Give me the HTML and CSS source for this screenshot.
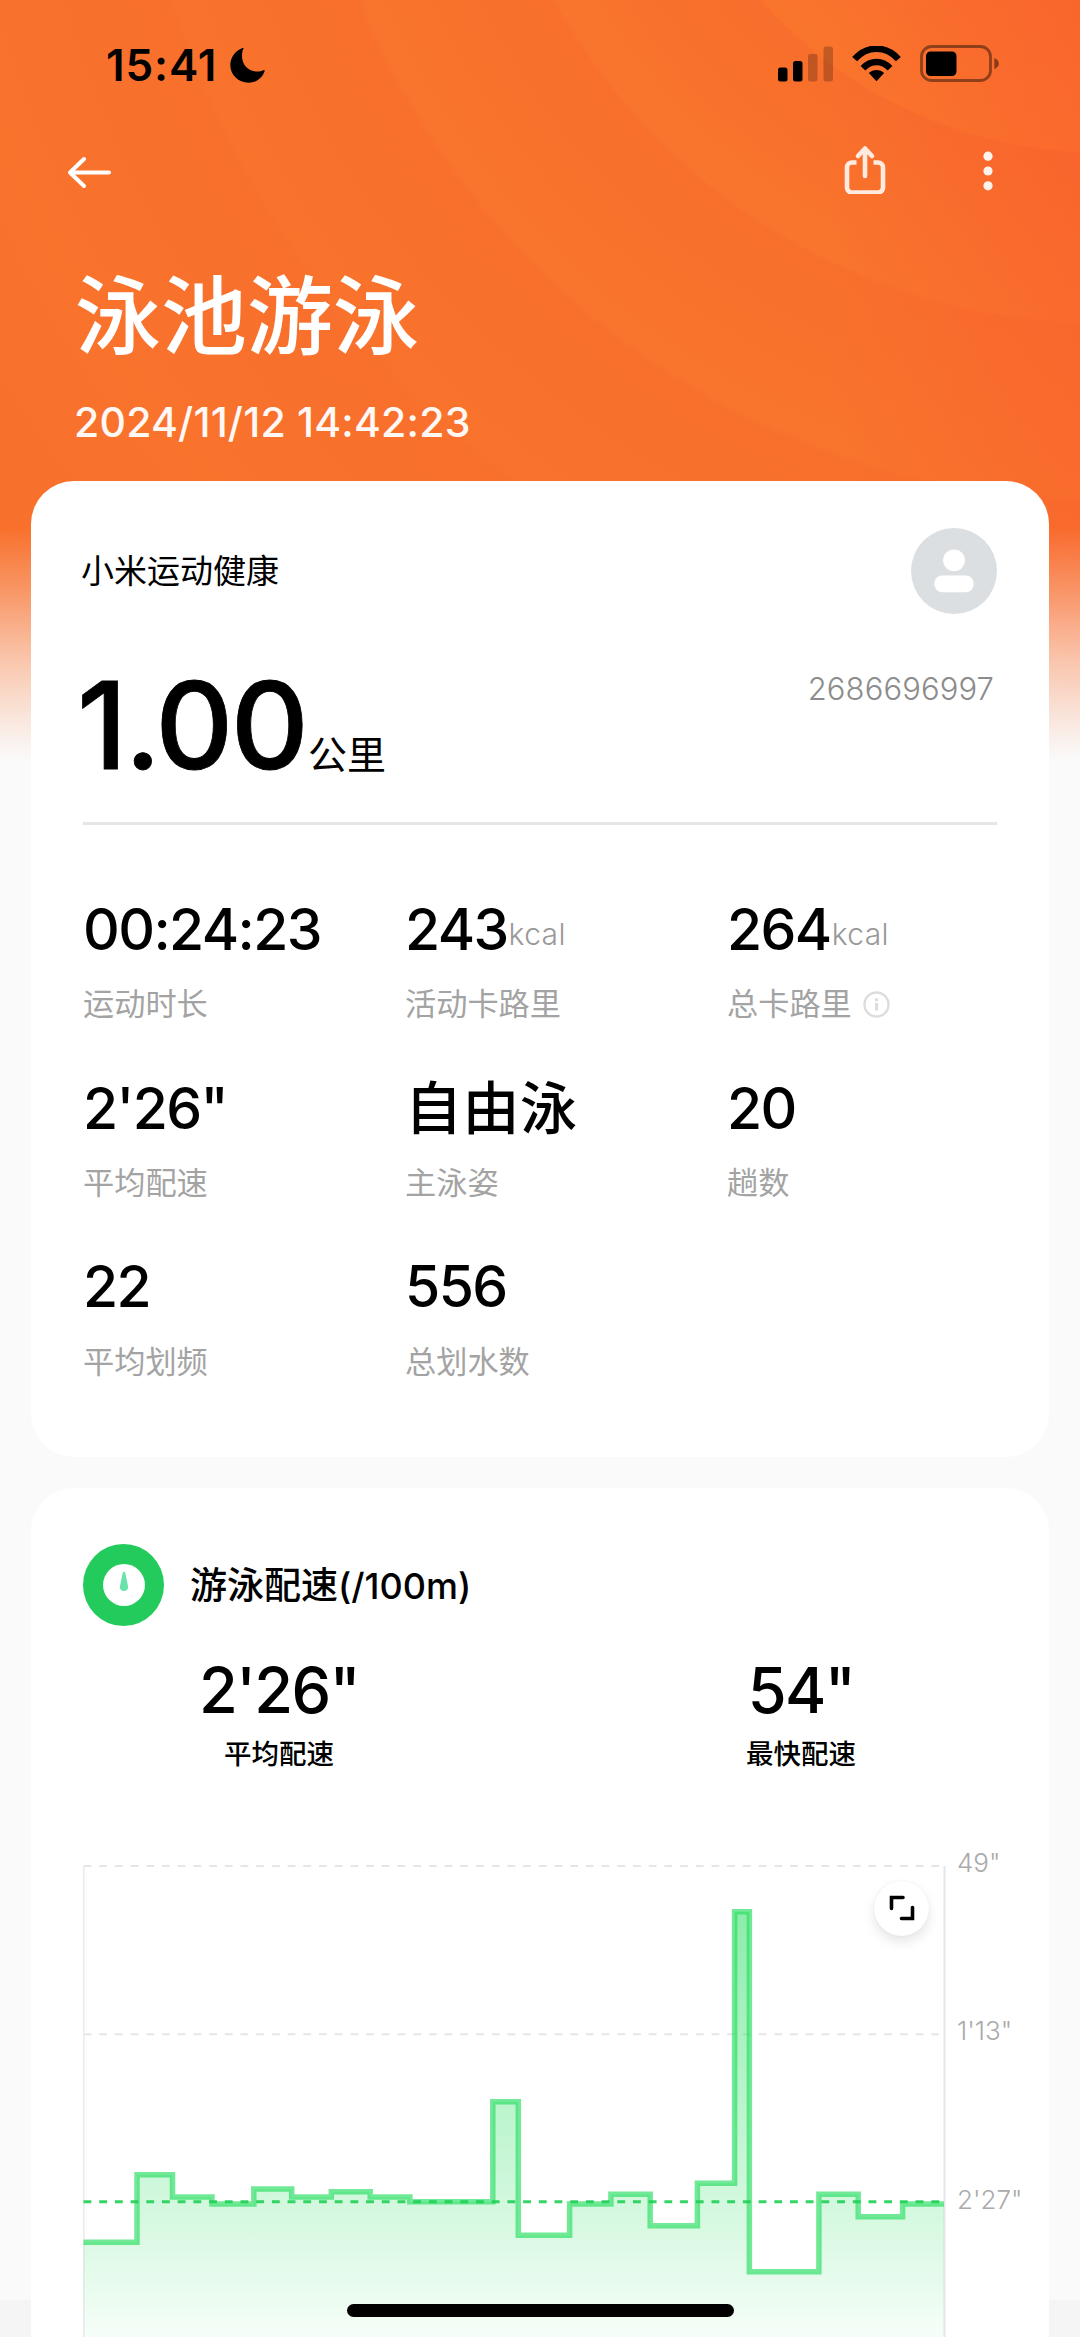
FILE: index.html
```html
<!DOCTYPE html>
<html lang="zh-CN">
<head>
<meta charset="utf-8">
<title>泳池游泳</title>
<link rel="stylesheet" href="styles.css">
</head>
<body>
<div class="page">
  <header class="status">
    <div class="status-left">
      <span class="clock">15:41</span>
      <svg class="moon" viewBox="0 0 35 35"><path d="M13.5 0.6C12.3 3 12 5.5 12 8c0 9 6.500 15.500 15.500 15.500 2.200 0 4.200-.4 6-1.300.9-.4 1.400.2 1.100 1C32.400 30 26 34.700 18.500 34.700 8.500 34.700.3 27 .3 17 .3 9.500 5 3 12 .2c1-.4 1.900-.2 1.500.4z"/></svg>
    </div>
    <div class="status-right">
      <svg width="56" height="36" viewBox="0 0 56 36"><rect x="0" y="21.500" width="9.500" height="14" rx="2.500"/><rect x="15" y="15" width="9.500" height="20.500" rx="2.500"/><g opacity=".22"><rect x="30" y="8" width="9.500" height="27.500" rx="2.500"/><rect x="45.500" y="0.500" width="9.500" height="35" rx="2.500"/></g></svg>
      <svg class="wifi" width="49" height="36" viewBox="0 0 49 36"><g fill="none" stroke="#000" stroke-width="6.500"><path d="M2.600 13.200C15-.8 34-.8 46.400 13.200"/><path d="M11 22.200c7.800-8.200 19.200-8.200 27 0"/></g><path d="M24.500 35.200l-7.700-8.200c4.200-4 11.200-4 15.400 0z"/></svg>
      <svg class="battery" width="80" height="37" viewBox="0 0 80 37"><rect x="1.500" y="1.500" width="69" height="34" rx="10" fill="none" stroke="#000" stroke-opacity=".42" stroke-width="2.800"/><rect x="6" y="6.500" width="30.500" height="24.500" rx="4.500"/><path d="M74.300 13v11c6-2 6-9 0-11z" opacity=".45"/></svg>
    </div>
  </header>

  <nav class="nav">
    <svg width="44" height="34" viewBox="0 0 44 34" class="line"><path d="M42 17.500H3M17 4 3 17.500 17 31"/></svg>
    <div class="nav-actions">
      <svg width="42" height="50" viewBox="0 0 42 50" class="line pale"><path d="M12.500 18.500H8a5 5 0 0 0-5 5v20.500a5 5 0 0 0 5 4.500h26a5 5 0 0 0 5-4.500V23.500a5 5 0 0 0-5-5h-4.500" stroke-linecap="butt"/><path d="M21 32V5M14 12 21 4.500l7 7.500"/></svg>
      <svg width="10" height="40" viewBox="0 0 10 40" class="dots"><circle cx="5" cy="5.200" r="4.600"/><circle cx="5" cy="20" r="4.600"/><circle cx="5" cy="34.800" r="4.600"/></svg>
    </div>
  </nav>

  <h1 class="title">泳池游泳</h1>
  <p class="date">2024/11/12 14:42:23</p>

  <section class="card summary">
    <div class="row">
      <span class="app">小米运动健康</span>
      <svg width="86" height="86" viewBox="0 0 86 86"><circle cx="43" cy="43" r="43" fill="#dcdfe2"/><circle cx="43" cy="32.300" r="10.900" fill="#fff"/><rect x="23.300" y="47.500" width="39.400" height="16.800" rx="8" fill="#fff"/></svg>
    </div>
    <div class="row distance">
      <div class="distance-value"><span class="km">1.00</span><span class="km-unit">公里</span></div>
      <span class="uid">2686696997</span>
    </div>
    <hr class="divider">
    <div class="stats">
      <div><div class="value">00:24:23</div><div class="label">运动时长</div></div>
      <div><div class="value">243<small>kcal</small></div><div class="label">活动卡路里</div></div>
      <div><div class="value">264<small>kcal</small></div><div class="label">总卡路里<svg class="info" width="27" height="27" viewBox="0 0 27 27"><circle cx="13.500" cy="13.500" r="12" fill="none" stroke="#dcdcdc" stroke-width="2.400"/><circle cx="13.500" cy="8.800" r="1.700"/><path d="M12 12h3v7.500h-3z"/></svg></div></div>
      <div><div class="value">2'26"</div><div class="label">平均配速</div></div>
      <div><div class="value cjk">自由泳</div><div class="label">主泳姿</div></div>
      <div><div class="value">20</div><div class="label">趟数</div></div>
      <div><div class="value">22</div><div class="label">平均划频</div></div>
      <div><div class="value">556</div><div class="label">总划水数</div></div>
    </div>
  </section>

  <section class="card pace">
    <div class="pace-head">
      <svg width="81" height="82" viewBox="0 0 81 82"><ellipse cx="40.500" cy="41" rx="40.500" ry="41" fill="#23cb5c"/><circle cx="41" cy="41" r="21" fill="#fff"/><path d="M39.700 29c.3-1.700 2.300-1.700 2.600 0l2.800 13.500c.5 6-8.700 6-8.200 0z" fill="#6ae3ab"/></svg>
      <h2>游泳配速<span>(/100m)</span></h2>
    </div>
    <div class="pace-metrics">
      <div><div class="big">2'26"</div><div class="caption">平均配速</div></div>
      <div><div class="big">54"</div><div class="caption">最快配速</div></div>
    </div>
    <div class="chart">
      <svg class="plot" width="863" height="472" viewBox="83 1865 863 472">
        <defs><linearGradient id="area" gradientUnits="userSpaceOnUse" x1="0" y1="1911" x2="0" y2="2345"><stop offset="0" stop-color="#22dc5c" stop-opacity=".52"/><stop offset=".55" stop-color="#22dc5c" stop-opacity=".26"/><stop offset=".76" stop-color="#22dc5c" stop-opacity=".16"/><stop offset="1" stop-color="#22dc5c" stop-opacity=".03"/></linearGradient></defs>
        <g stroke="#e6e6e6" stroke-width="2" fill="none"><path d="M83.500 1866H944M83.500 2034.300H944" stroke-dasharray="7.850 7.850"/><path d="M83.800 1866V2337" stroke="#ececec" stroke-width="1.500"/><path d="M944.500 1866V2337"/></g>
        <path fill="url(#area)" d="M83.500 2337V2242.300H137V2174.700H172.500V2197H212V2204H253.800V2189H291.700V2197H331.300V2191.700H370.200V2197H409.800V2201.700H492.800V2101.700H518.300V2235.300H569.600V2204H610.900V2194.300H650.200V2225.700H697.400V2183.300H734.600V1911.700H749.400V2271.700H818.900V2194.300H858.200V2216.700H902.600V2204H944V2337z"/>
        <path fill="none" stroke="#22dc5c" stroke-opacity=".64" stroke-width="5.500" d="M83.500 2242.300H137V2174.700H172.500V2197H212V2204H253.800V2189H291.700V2197H331.300V2191.700H370.200V2197H409.800V2201.700H492.800V2101.700H518.300V2235.300H569.600V2204H610.900V2194.300H650.200V2225.700H697.400V2183.300H734.600V1911.700H749.400V2271.700H818.900V2194.300H858.200V2216.700H902.600V2204H944"/>
        <path stroke="#20cf57" stroke-opacity=".9" stroke-width="3" stroke-dasharray="7.850 7.850" d="M83.500 2201.700H944"/>
      </svg>
      <div class="axis"><span>49"</span><span>1'13"</span><span>2'27"</span></div>
      <button class="expand" aria-label="展开"><svg width="26" height="26" viewBox="0 0 26 26"><path d="M2.500 13.500V2.500H14M12.500 23.500H23.500V12.500"/></svg></button>
    </div>
  </section>
  <div class="home-bar"></div>
</div>
</body>
</html>
```
FILE: styles.css
```css
* { box-sizing: border-box; }
body { margin: 0; font-family: Inter, "Noto Sans CJK SC", sans-serif; color: #000; }
svg { display: block; flex: none; }
.page {
  position: relative;
  width: 1080px;
  height: 2337px;
  overflow: hidden;
  background:
    linear-gradient(#fafafa, #fafafa) 0 760px / 100% 1540px no-repeat,
    linear-gradient(rgba(250,250,250,0) 528px, rgba(250,250,250,.28) 590px, rgba(250,250,250,.62) 660px, rgba(250,250,250,.87) 722px, #fafafa 760px) 0 0 / 100% 760px no-repeat,
    radial-gradient(ellipse 300px 900px at 1130px 160px, rgba(250,84,46,.42), rgba(250,84,46,0)) 0 0 / 100% 760px no-repeat,
    radial-gradient(circle at 1100px -300px, #f96e2c 290px, #fa752c 451px, #f86e2c 454px, #f9752d 621px, #f8702c 625px, #f9742c 796px, #f8702c 804px, #f9732d 972px, #f8702c 984px, #f9732d 1180px, #f8702c 1400px) 0 0 / 100% 760px no-repeat,
    #f5f5f5;
}
.status { height: 130px; padding: 0 80px 0 106px; display: flex; justify-content: space-between; align-items: center; }
.status-left, .status-right { display: flex; align-items: center; }
.clock { font-size: 44px; line-height: 54px; font-weight: 600; letter-spacing: .9px; width: 124px; white-space: nowrap; }
.moon { width: 35px; height: 35px; }
.status-right { margin-top: -3px; }
.wifi { margin-left: 18px; }
.battery { margin-left: 19px; }
.nav { height: 85px; padding: 0 87px 0 67px; display: flex; align-items: center; justify-content: space-between; }
.nav > .line { margin-top: -2px; }
.nav-actions { display: flex; align-items: center; gap: 97px; }
.line { fill: none; stroke: #fff; stroke-width: 4; stroke-linecap: round; stroke-linejoin: round; }
.pale { stroke: #ffeae0; stroke-width: 4.600; margin-top: -8px; }
.dots { fill: #fff2ec; margin-top: -3px; }
.title { margin: 59px 0 0 75px; font-size: 86px; line-height: 86px; font-weight: 500; color: #fff; }
.date { margin: 37px 0 0 74px; font-size: 41px; line-height: 50px; font-weight: 500; letter-spacing: .2px; color: #fff8f4; }
.card { margin: 0 31px; background: #fff; border-radius: 43px; }
.row { display: flex; justify-content: space-between; align-items: center; }
.summary { margin-top: 34px; padding: 47px 52px 75px; }
.app { margin-left: -2px; font-size: 33px; line-height: 40px; font-weight: 400; }
.distance { margin-top: 51px; height: 120px; align-items: flex-start; }
.distance-value { display: flex; align-items: baseline; }
.km { margin-left: -6px; font-size: 121px; line-height: 120px; font-weight: 500; letter-spacing: -2.700px; -webkit-text-stroke: .8px #000; }
.km-unit { font-size: 39px; line-height: 40px; margin-left: 2px; }
.uid { margin: 4px 3px 0 0; font-size: 31px; line-height: 40px; font-weight: 300; letter-spacing: .1px; color: #8c8c8c; }
.divider { margin: 37px 0 0; border: 0; height: 3px; background: #e6e6e6; }
.stats { margin-top: 75px; display: grid; grid-template-columns: 322px 322px 1fr; row-gap: 54.300px; }
.value { font-size: 57px; line-height: 60px; font-weight: 500; letter-spacing: -1.600px; white-space: nowrap; }
.value.cjk { letter-spacing: .5px; }
.value small { font-size: 30px; font-weight: 300; color: #999; letter-spacing: .4px; margin-left: 1px; vertical-align: 5px; line-height: 1; }
.label { margin-top: 24.400px; font-size: 31.200px; line-height: 40px; font-weight: 400; color: #a3a3a3; display: flex; align-items: center; white-space: nowrap; }
.info { margin-left: 11px; fill: #dcdcdc; }
.pace { margin-top: 31px; padding: 56px 0 0; height: 900px; }
.pace-head { display: flex; align-items: center; gap: 26px; padding-left: 52px; }
.pace-head h2 { margin: 3px 0 0; font-size: 37px; line-height: 50px; font-weight: 500; }
.pace-head span { font-size: 36px; }
.pace-metrics { margin-top: 29px; display: flex; justify-content: space-between; text-align: center; }
.pace-metrics > div { width: 496px; }
.big { font-size: 63px; line-height: 70px; font-weight: 500; letter-spacing: -1.600px; }
.caption { margin-top: 14px; font-size: 27.500px; line-height: 30px; font-weight: 500; }
.chart { position: relative; margin-top: 79px; padding-left: 52px; display: flex; }
.plot { margin-top: 17px; }
.axis { margin-left: 11px; display: flex; flex-direction: column; gap: 138.500px; font-size: 26px; line-height: 30px; font-weight: 300; color: #aaa; white-space: nowrap; }
.expand { position: absolute; left: 843px; top: 33px; width: 55px; height: 55px; padding: 0; border: 0; border-radius: 50%; background: #fff; box-shadow: 0 6px 12px rgba(0,0,0,.1), 0 0 2px rgba(0,0,0,.08); display: grid; place-items: center; }
.expand svg { fill: none; stroke: #000; stroke-width: 3.600; stroke-linecap: round; }
.home-bar { position: absolute; left: 347px; top: 2304px; width: 387px; height: 13px; border-radius: 7px; background: #000; }
```
